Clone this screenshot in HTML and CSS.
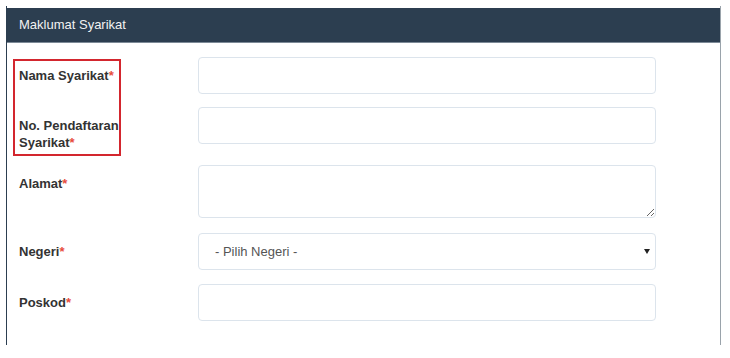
FILE: index.html
```html
<!DOCTYPE html>
<html>
<head>
  <title>Maklumat Syarikat</title>
  <meta name="viewport" content="width=device-width, initial-scale=1.0" />
  <link rel="stylesheet" href="styles.css">
</head>
<body>

  <div class="panel">
    <div class="panel-heading">Maklumat Syarikat</div>

    <div class="panel-body">
      <div class="form-row">
        <label class="form-label" for="nama">Nama Syarikat<span class="req">*</span></label>
        <input type="text" id="nama" class="form-control">
      </div>

      <div class="form-row">
        <label class="form-label" for="nodaftar">No. Pendaftaran Syarikat<span class="req">*</span></label>
        <input type="text" id="nodaftar" class="form-control">
      </div>

      <div class="form-row row-textarea">
        <label class="form-label" for="alamat">Alamat<span class="req">*</span></label>
        <textarea id="alamat" class="form-control textarea"></textarea>
      </div>

      <div class="form-row">
        <label class="form-label" for="negeri">Negeri<span class="req">*</span></label>
        <div class="select-wrap">
          <select id="negeri" class="form-control">
            <option value="">- Pilih Negeri -</option>
          </select>
        </div>
      </div>

      <div class="form-row">
        <label class="form-label" for="poskod">Poskod<span class="req">*</span></label>
        <input type="text" id="poskod" class="form-control">
      </div>
    </div>

    <!-- annotation box around the first two labels -->
    <div class="highlight"></div>
  </div>

</body>
</html>
```

FILE: styles.css
```css
body {
  margin: 0;
  background: #fff;
  font-family: "Liberation Sans", Arial, sans-serif;
  font-size: 13px;
  color: #333;
}

.panel {
  position: relative;
  box-sizing: border-box;
  width: 715px;
  height: 339px;
  margin: 6px 0 0 6px;
  padding-top: 2px;
  border-left: 1px solid #2c3e50;
  border-right: 1px solid #9aa3ab;
}

.panel-heading {
  height: 34px;
  line-height: 34px;
  padding-left: 12px;
  background: #2c3e50;
  border-bottom: 1px solid #7d8a97;
  color: #f2f2f2;
  font-size: 13px;
}

.panel-body {
  padding: 14px 0 0 12px;
}

.form-row {
  display: flex;
  align-items: flex-start;
  margin-bottom: 14px;
}

.form-row:first-child {
  margin-bottom: 13px;
}

.form-row.row-textarea {
  margin-bottom: 15px;
}

.form-label {
  box-sizing: border-box;
  flex: 0 0 179px;
  padding: 10px 69px 0 0;
  font-weight: bold;
  line-height: 17px;
  color: #333;
}

.req {
  color: #e74c3c;
}

.form-control {
  box-sizing: border-box;
  width: 458px;
  height: 37px;
  margin: 0;
  padding: 0 16px;
  border: 1px solid #dce4ec;
  border-radius: 4px;
  background: #fff;
  font-family: "Liberation Sans", Arial, sans-serif;
  font-size: 13px;
  color: #555;
}

.textarea {
  height: 53px;
  padding-top: 8px;
  resize: vertical;
}

.select-wrap {
  position: relative;
  width: 458px;
}

.select-wrap select {
  appearance: none;
  -webkit-appearance: none;
  outline: none;
}

.select-wrap::after {
  content: "";
  position: absolute;
  right: 6px;
  top: 16px;
  border-left: 3px solid transparent;
  border-right: 3px solid transparent;
  border-top: 5px solid #222;
}

.highlight {
  position: absolute;
  left: 6px;
  top: 53px;
  width: 108px;
  height: 97px;
  box-sizing: border-box;
  border: 2px solid #d3262e;
}
```
